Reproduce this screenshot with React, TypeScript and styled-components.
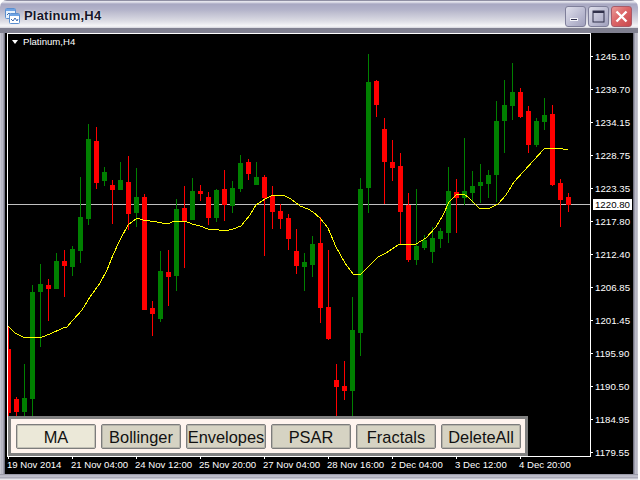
import React from 'react';
import styled, { createGlobalStyle } from 'styled-components';

const GlobalStyle = createGlobalStyle`
  html, body {
    margin: 0;
    padding: 0;
    background: #ffffff;
    overflow: hidden;
  }
`;

const Window = styled.div`
  width: 638px;
  height: 480px;
  display: flex;
  flex-direction: column;
  border-radius: 7px 7px 0 0;
  overflow: hidden;
  font-family: 'Liberation Sans', Arial, sans-serif;
`;

const TitleBar = styled.div`
  height: 28px;
  flex: none;
  box-sizing: border-box;
  display: flex;
  align-items: center;
  padding: 2px 6px 0 5px;
  gap: 3px;
  border-top: 1px solid #8f8fa3;
  background: linear-gradient(
    to bottom,
    #e4e4ec 0,
    #e4e4ec 1px,
    #a8a8c2 3px,
    #b4b4ca 9px,
    #dcdce4 20px,
    #f6f6f8 25px,
    #d4d4dc 27px
  );
`;

const TitleText = styled.span`
  font-size: 13px;
  font-weight: 700;
  color: #16162a;
  letter-spacing: 0.2px;
  text-shadow: 0 0 2px #ffffff;
  flex: 1;
`;

const Buttons = styled.div`
  display: flex;
  gap: 2px;
  margin-top: 2px;
`;

const CaptionButton = styled.div<{ $close?: boolean }>`
  width: 21px;
  height: 21px;
  box-sizing: border-box;
  border: 1px solid ${(p) => (p.$close ? '#a85a68' : '#7f7f9a')};
  border-radius: 3px;
  display: flex;
  align-items: center;
  justify-content: center;
  background: ${(p) =>
    p.$close
      ? 'linear-gradient(135deg, #e89a98 0%, #dc6668 45%, #c8484c 100%)'
      : 'linear-gradient(135deg, #e0e0ec 0%, #bcbcd2 55%, #a0a0bc 100%)'};
`;

const FrameBody = styled.div`
  flex: 1;
  min-height: 0;
  display: flex;
  flex-direction: column;
  background: #000000;
  border-top: 5px solid;
  border-image: linear-gradient(to bottom, #808090, #6e6e80 60%, #000000 60%) 1;
`;

const Row = styled.div`
  flex: 1;
  min-height: 0;
  display: flex;
`;

const SideBand = styled.div<{ $side: 'left' | 'right' }>`
  flex: none;
  width: 6px;
  background: linear-gradient(
    to ${(p) => (p.$side === 'left' ? 'right' : 'left')},
    #e8e8ee 0,
    #a0a0b0 1px,
    #c8c8d4 2px,
    #8c8c9c 4px,
    #5c5c6c 5px,
    #000000 5px
  );
`;

const BottomBand = styled.div`
  flex: none;
  height: 6px;
  background: linear-gradient(
    to bottom,
    #8c8c9c 0,
    #c8c8d4 2px,
    #a0a0b0 4px,
    #e8e8ee 5px
  );
`;

const ChartGrid = styled.div`
  flex: 1;
  min-width: 0;
  display: grid;
  grid-template-columns: 584px 1fr;
  grid-template-rows: 424px 1fr;
  margin-left: 1px;
  color: #ffffff;
`;

const Plot = styled.div`
  position: relative;
  box-sizing: border-box;
  border: 1px solid #ffffff;
  overflow: hidden;
  background: #000000;
`;

const PlotSvg = styled.svg`
  display: block;
  shape-rendering: crispEdges;
`;

const ChartLabel = styled.div`
  position: absolute;
  top: 2px;
  left: 4px;
  display: flex;
  align-items: center;
  gap: 5px;
  font-size: 9.6px;
  line-height: 12px;
`;

const Triangle = styled.span`
  width: 0;
  height: 0;
  border-left: 3.5px solid transparent;
  border-right: 3.5px solid transparent;
  border-top: 4px solid #ffffff;
`;

const Panel = styled.div`
  position: absolute;
  left: 0;
  bottom: 0;
  display: flex;
  gap: 5px;
  padding: 5px 4px 4px 5px;
  background: #fff4ee;
  border: 3px solid #808080;
`;

const PanelButton = styled.div<{ $active?: boolean }>`
  width: 80px;
  height: 25px;
  box-sizing: border-box;
  border: 1px solid #7c7c7c;
  outline: 1px solid rgba(124, 124, 124, 0.35);
  outline-offset: -2px;
  border-radius: 2px;
  background: ${(p) => (p.$active ? '#ebe8d8' : '#d6d3c3')};
  color: #111111;
  font-size: 16.4px;
  line-height: 24px;
  text-align: center;
  white-space: nowrap;
`;

const PriceAxis = styled.div`
  position: relative;
  padding-top: 7px;
  display: flex;
  flex-direction: column;
`;

const PriceRow = styled.div`
  height: 33px;
  flex: none;
  display: flex;
  align-items: center;
  gap: 2px;
  font-size: 9.7px;
`;

const PriceTick = styled.span`
  width: 3px;
  height: 1px;
  background: #ffffff;
  margin-left: -1px;
`;

const LastPrice = styled.div`
  position: absolute;
  top: 166px;
  left: 2px;
  width: 39px;
  height: 11px;
  background: #ffffff;
  color: #000000;
  font-size: 9.7px;
  line-height: 11px;
  text-align: center;
`;

const TimeAxis = styled.div`
  display: grid;
  grid-template-columns: repeat(9, 64px);
  grid-column: 1 / 3;
`;

const TimeCell = styled.div`
  display: flex;
  flex-direction: column;
  font-size: 9.6px;
  line-height: 12px;
  white-space: nowrap;
`;

const TimeTick = styled.span`
  width: 1px;
  height: 3px;
  margin-left: 1px;
  margin-top: -1px;
  background: #ffffff;
`;

type Candle = [number, number, number, number, 'r' | 'g'];

// high, low, body top, body bottom, in pixels from the top of the window. Spaced 8px from x = 8
const candles: Candle[] = [
  [327, 416, 349, 413, 'r'], [397, 416, 399, 412, 'r'], [364, 416, 398, 412, 'g'],
  [285, 416, 292, 399, 'g'], [264, 347, 284, 292, 'g'], [279, 321, 285, 289, 'r'],
  [253, 289, 261, 289, 'g'], [250, 297, 261, 266, 'r'], [246, 276, 249, 267, 'g'],
  [177, 263, 217, 251, 'g'], [124, 225, 139, 219, 'g'], [127, 189, 141, 183, 'r'],
  [167, 186, 172, 181, 'g'], [180, 224, 185, 190, 'r'], [162, 190, 180, 190, 'g'],
  [156, 230, 182, 214, 'r'], [168, 227, 197, 213, 'g'], [194, 310, 197, 310, 'r'],
  [301, 336, 308, 314, 'r'], [251, 322, 271, 319, 'g'], [250, 306, 272, 277, 'r'],
  [199, 291, 209, 276, 'g'], [186, 268, 208, 221, 'r'], [178, 220, 191, 220, 'g'],
  [185, 201, 191, 194, 'r'], [192, 225, 197, 218, 'r'], [189, 222, 190, 218, 'g'],
  [170, 221, 189, 205, 'r'], [181, 213, 188, 206, 'g'], [155, 192, 163, 189, 'g'],
  [159, 180, 162, 174, 'r'], [162, 185, 177, 185, 'g'], [175, 256, 177, 198, 'r'],
  [186, 229, 196, 212, 'r'], [204, 229, 211, 219, 'r'], [214, 250, 218, 239, 'r'],
  [229, 274, 251, 266, 'r'], [253, 291, 262, 267, 'g'], [236, 277, 244, 265, 'g'],
  [217, 323, 243, 308, 'r'], [250, 340, 307, 339, 'r'], [364, 416, 380, 387, 'r'],
  [361, 400, 386, 391, 'r'], [297, 416, 330, 391, 'g'], [178, 356, 189, 333, 'g'],
  [54, 213, 82, 188, 'g'], [80, 117, 81, 105, 'r'], [118, 204, 129, 162, 'r'],
  [140, 181, 162, 168, 'r'], [153, 244, 166, 212, 'r'], [193, 262, 205, 260, 'r'],
  [189, 265, 246, 260, 'g'], [235, 250, 240, 248, 'g'], [227, 263, 238, 252, 'g'],
  [228, 248, 231, 239, 'g'], [167, 243, 191, 233, 'g'], [179, 233, 192, 198, 'r'],
  [138, 205, 191, 198, 'g'], [171, 203, 186, 193, 'g'], [164, 203, 182, 186, 'g'],
  [170, 198, 175, 184, 'g'], [101, 202, 121, 175, 'g'], [80, 153, 105, 121, 'g'],
  [63, 120, 92, 106, 'g'], [88, 118, 92, 117, 'r'], [106, 153, 111, 145, 'r'],
  [118, 147, 121, 145, 'g'], [98, 130, 115, 122, 'g'], [105, 186, 114, 185, 'r'],
  [179, 227, 183, 200, 'r'], [193, 212, 197, 205, 'r'],
];

const movingAverage =
  '8,326 15,333 25,338 33,337 42,337 50,334 63,328 67,327 73,320 82,310 90,297 100,283 107,270 113,255 120,240 128,225 137,218 143,220 157,222 167,224 175,221 185,221 192,224 200,226 208,229 213,229 225,231 233,229 241,226 250,215 256,205 265,199 273,195 283,195 291,199 300,206 308,209 313,212 320,218 328,228 336,247 345,263 353,274 360,275 370,265 378,257 386,253 398,245 416,244 426,238 436,227 443,215 449,202 456,195 464,194 469,198 479,208 488,209 498,204 506,195 514,182 523,172 534,160 544,149 549,148 563,149 568,150';

const prices = [
  '1245.10', '1239.70', '1234.15', '1228.75', '1223.35', '1217.80', '1212.40',
  '1206.85', '1201.45', '1195.90', '1190.50', '1184.95', '1179.55',
];

const times = [
  '19 Nov 2014', '21 Nov 04:00', '24 Nov 12:00', '25 Nov 20:00', '27 Nov 04:00',
  '28 Nov 16:00', '2 Dec 04:00', '3 Dec 12:00', '4 Dec 20:00',
];

const tools = ['MA', 'Bollinger', 'Envelopes', 'PSAR', 'Fractals', 'DeleteAll'];

const AppIcon = () => (
  <svg width="16" height="16" viewBox="0 0 16 16">
    <rect x="0.5" y="0.5" width="10" height="10" rx="1" fill="#e8f2fc" stroke="#5b8fd0" />
    <rect x="1" y="1" width="9" height="2" fill="#6fa4e4" />
    <path d="M2 7l2-2 2 2 2-2" fill="none" stroke="#3a6ab0" />
    <rect x="4.5" y="5.5" width="10" height="10" rx="1" fill="#ffffff" stroke="#5b8fd0" />
    <rect x="5" y="6" width="9" height="2" fill="#6fa4e4" />
    <path d="M6 11l2 2 2-3 2 3 1-2" fill="none" stroke="#3a6ab0" />
  </svg>
);

const MinIcon = () => (
  <svg width="13" height="13" viewBox="0 0 13 13">
    <rect x="1" y="8" width="8" height="3" fill="#f4f4fa" />
    <rect x="2" y="9" width="6" height="1" fill="#30304a" />
  </svg>
);

const MaxIcon = () => (
  <svg width="13" height="13" viewBox="0 0 13 13">
    <rect x="1" y="1" width="11" height="11" fill="none" stroke="#30304a" />
    <rect x="1" y="1" width="11" height="2" fill="#30304a" />
  </svg>
);

const CloseIcon = () => (
  <svg width="13" height="13" viewBox="0 0 13 13">
    <path d="M1.5 1.5l10 10M11.5 1.5l-10 10" stroke="#ffffff" strokeWidth="2.4" />
  </svg>
);

const App: React.FC = () => {
  return (
    <Window>
      <GlobalStyle />
      <TitleBar>
        <AppIcon />
        <TitleText>Platinum,H4</TitleText>
        <Buttons>
          <CaptionButton><MinIcon /></CaptionButton>
          <CaptionButton><MaxIcon /></CaptionButton>
          <CaptionButton $close><CloseIcon /></CaptionButton>
        </Buttons>
      </TitleBar>
      <FrameBody>
        <Row>
          <SideBand $side="left" />
          <ChartGrid>
            <Plot>
              <PlotSvg width="582" height="422" viewBox="8 34 582 422">
                <rect x="8" y="204" width="582" height="1" fill="#c0c0c0" />
                {candles.map(([high, low, top, bottom, color], i) => {
                  const x = 8 + i * 8;
                  const fill = color === 'r' ? '#ff0000' : '#008000';
                  return (
                    <g key={x} fill={fill}>
                      <rect x={x} y={high} width="1" height={low - high} />
                      <rect x={x - 2} y={top} width="5" height={bottom - top} />
                    </g>
                  );
                })}
                <polyline points={movingAverage} fill="none" stroke="#ffff00" strokeWidth="1" />
              </PlotSvg>
              <ChartLabel>
                <Triangle />
                Platinum,H4
              </ChartLabel>
              <Panel>
                {tools.map((tool, i) => (
                  <PanelButton key={tool} $active={i === 0}>{tool}</PanelButton>
                ))}
              </Panel>
            </Plot>
            <PriceAxis>
              {prices.map((price) => (
                <PriceRow key={price}>
                  <PriceTick />
                  {price}
                </PriceRow>
              ))}
              <LastPrice>1220.80</LastPrice>
            </PriceAxis>
            <TimeAxis>
              {times.map((time) => (
                <TimeCell key={time}>
                  <TimeTick />
                  {time}
                </TimeCell>
              ))}
            </TimeAxis>
          </ChartGrid>
          <SideBand $side="right" />
        </Row>
        <BottomBand />
      </FrameBody>
    </Window>
  );
};

export default App;
